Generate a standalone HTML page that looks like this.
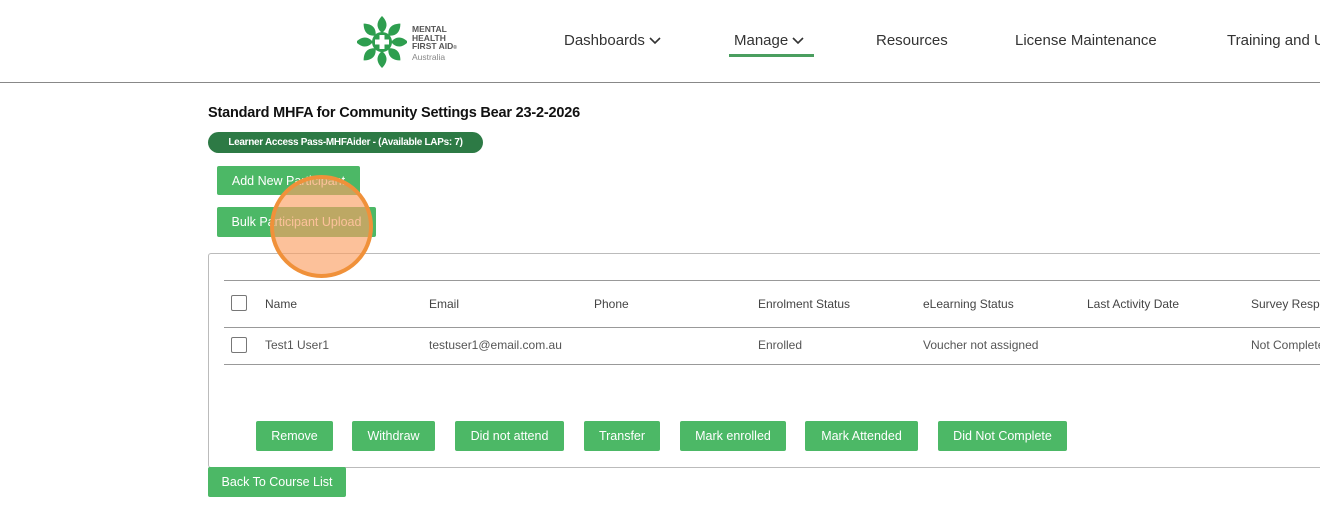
<!DOCTYPE html><html><head><style>
body{margin:0;width:1320px;height:524px;overflow:hidden;background:#fff;font-family:"Liberation Sans",sans-serif;position:relative;color:#222}
.a{position:absolute}
.nav{font-size:15px;color:#333;top:32px}
.btn{position:absolute;background:#4cb866;color:#fff;font-size:12.5px;display:flex;align-items:center;justify-content:center;border-radius:2px}
.th{position:absolute;top:297px;font-size:12px;color:#444}
.td{position:absolute;top:338px;font-size:12px;color:#555}
.cb{position:absolute;left:231px;width:14px;height:14px;border:1px solid #777;border-radius:2px}
.ln{position:absolute;left:224px;right:0;height:1px;background:#999}
</style></head><body>
<svg class="a" style="left:357px;top:16px" width="50" height="52" viewBox="-25 -26 50 52">
<g fill="#2e9e4f">
<path id="l" d="M0-9C-6-14-6-20 0-26 6-20 6-14 0-9z"/>
<use href="#l" transform="rotate(45)"/><use href="#l" transform="rotate(90)"/><use href="#l" transform="rotate(135)"/><use href="#l" transform="rotate(180)"/><use href="#l" transform="rotate(225)"/><use href="#l" transform="rotate(270)"/><use href="#l" transform="rotate(315)"/>
<circle r="10"/></g><path d="M-2.5-7h5v4.5h4.5v5h-4.5v4.5h-5v-4.5h-4.5v-5h4.5z" fill="#fff"/></svg>
<div class="a" style="left:412px;top:25px;font-size:8.5px;font-weight:bold;line-height:8.5px;color:#555">MENTAL<br>HEALTH<br>FIRST AID<span style="font-size:5px">®</span><br><span style="font-weight:normal;color:#888">Australia</span></div>
<div class="a nav" style="left:564px">Dashboards <svg width="12" height="8"><path d="M1 1l5 5 5-5" stroke="#333" stroke-width="1.6" fill="none"/></svg></div>
<div class="a nav" style="left:734px">Manage <svg width="12" height="8"><path d="M1 1l5 5 5-5" stroke="#333" stroke-width="1.6" fill="none"/></svg></div>
<div class="a" style="left:729px;top:54px;width:85px;height:3px;background:#4a9e5f"></div>
<div class="a nav" style="left:876px">Resources</div>
<div class="a nav" style="left:1015px">License Maintenance</div>
<div class="a nav" style="left:1227px;white-space:nowrap">Training and Us</div>
<div class="a" style="left:0;right:0;top:82px;height:1px;background:#888"></div>
<div class="a" style="left:208px;top:105px;font-size:14.5px;font-weight:bold;color:#111;letter-spacing:-.2px">Standard MHFA for Community Settings Bear 23-2-2026</div>
<div class="a" style="left:208px;top:132px;width:275px;height:21px;border-radius:11px;background:#2d7a45;color:#fff;font-size:10px;font-weight:bold;display:flex;align-items:center;justify-content:center;letter-spacing:-.3px">Learner Access Pass-MHFAider - (Available LAPs: 7)</div>
<div class="btn" style="left:217px;top:166px;width:143px;height:29px">Add New Participant</div>
<div class="btn" style="left:217px;top:207px;width:159px;height:30px">Bulk Participant Upload</div>
<div class="a" style="left:208px;top:253px;width:1120px;height:213px;border:1px solid #bbb;border-radius:3px"></div>
<div class="ln" style="top:280px"></div><div class="ln" style="top:327px"></div><div class="ln" style="top:364px"></div>
<div class="cb" style="top:295px"></div><div class="cb" style="top:337px"></div>
<div class="th" style="left:265px">Name</div><div class="th" style="left:429px">Email</div><div class="th" style="left:594px">Phone</div><div class="th" style="left:758px">Enrolment Status</div><div class="th" style="left:923px">eLearning Status</div><div class="th" style="left:1087px">Last Activity Date</div><div class="th" style="left:1251px;white-space:nowrap">Survey Response</div>
<div class="td" style="left:265px">Test1 User1</div><div class="td" style="left:429px">testuser1@email.com.au</div><div class="td" style="left:758px">Enrolled</div><div class="td" style="left:923px">Voucher not assigned</div><div class="td" style="left:1251px;white-space:nowrap">Not Completed</div>
<div class="btn" style="left:256px;top:421px;width:77px;height:30px">Remove</div>
<div class="btn" style="left:352px;top:421px;width:83px;height:30px">Withdraw</div>
<div class="btn" style="left:455px;top:421px;width:109px;height:30px">Did not attend</div>
<div class="btn" style="left:584px;top:421px;width:76px;height:30px">Transfer</div>
<div class="btn" style="left:680px;top:421px;width:106px;height:30px">Mark enrolled</div>
<div class="btn" style="left:805px;top:421px;width:113px;height:30px">Mark Attended</div>
<div class="btn" style="left:938px;top:421px;width:129px;height:30px">Did Not Complete</div>
<div class="btn" style="left:208px;top:467px;width:138px;height:30px">Back To Course List</div>
<div class="a" style="left:270px;top:175px;width:95px;height:95px;border-radius:50%;border:4px solid #f0913a;background:rgba(250,160,100,.65)"></div>
</body></html>
